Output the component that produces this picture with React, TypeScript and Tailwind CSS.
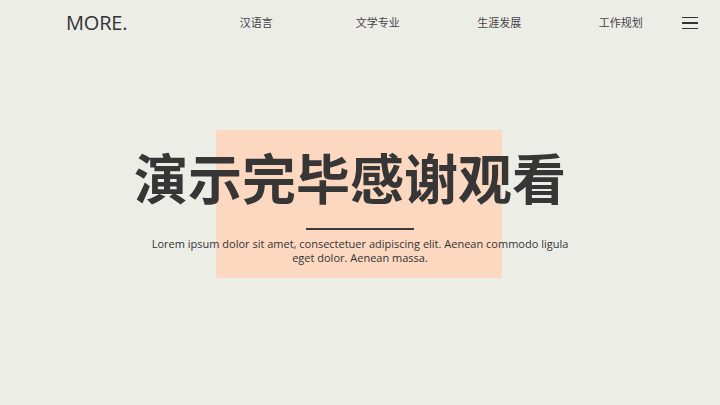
const navItems = ["汉语言", "文学专业", "生涯发展", "工作规划"];

const cjk = { fontFamily: '"Open Sans", "Noto Sans CJK SC", sans-serif' };

export default function App() {
    return (
        <div className="w-[720px] h-[405px] bg-[#edede8] text-[#333] overflow-hidden" style={cjk}>

            {/* Header */}
            <header className="flex items-center h-[46px] pl-[66px] pr-[22px]">
                <div className="text-[20px] tracking-[-0.2px] text-[#333] w-[134px]">MORE.</div>
                <nav className="flex-1 flex items-center">
                    {navItems.map((item) => (
                        <span key={item} className="w-[121.5px] text-center text-[11px] text-[#444]">{item}</span>
                    ))}
                </nav>
                <div className="flex flex-col gap-[4px] w-[17px]">
                    <span className="h-[1.5px] bg-[#333]" />
                    <span className="h-[1.5px] bg-[#333]" />
                    <span className="h-[1.5px] bg-[#333]" />
                </div>
            </header>

            {/* Hero */}
            <section className="grid justify-items-center pt-[84px]">
                <div className="[grid-area:1/1] w-[286px] h-[148px] bg-[#fdd8c0] ml-[-2px]" />
                <div className="[grid-area:1/1] flex flex-col items-center pt-[22px]">
                    <h1 className="text-[54px] leading-[55px] font-bold text-[#363636] mr-[20px]">演示完毕感谢观看</h1>
                    <div className="w-[108px] h-[2px] bg-[#3a3a3a] mt-[21px]" />
                    <p className="w-[430px] text-center text-[11px] leading-[14px] text-[#333] mt-[7px]">
                        Lorem ipsum dolor sit amet, consectetuer adipiscing elit. Aenean commodo ligula eget dolor. Aenean massa.
                    </p>
                </div>
            </section>
        </div>
    );
}
